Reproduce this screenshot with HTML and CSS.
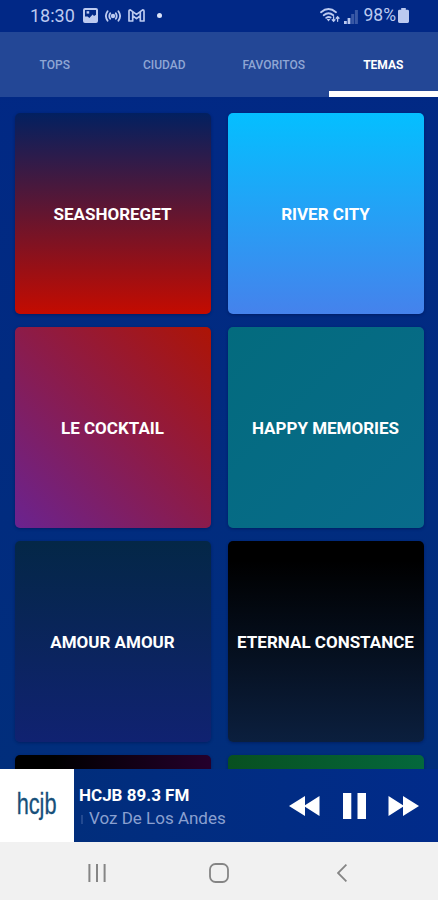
FILE: index.html
```html
<!DOCTYPE html>
<html lang="es">
<head>
<meta charset="UTF-8" />
<meta name="viewport" content="width=device-width, initial-scale=1" />
<title>Radio - Temas</title>
<link rel="stylesheet" href="styles.css">
</head>
<body>
<div class="phone">
  <div class="status-bar">
    <span class="clock">18:30</span>
    <svg class="icon-image" width="15" height="15" viewBox="0 0 15 15" aria-hidden="true">
      <rect x="1" y="1" width="13" height="13" rx="1" fill="none" stroke="currentColor" stroke-width="2"/>
      <path d="M2 8.6 L4.6 8.6 L6.4 10 L9.6 6.6 L11 8 L13.5 6.4 V13.5 H2 Z" fill="currentColor"/>
      <path d="M3.6 3.2 H6.2 V5.6 H3.6 Z" fill="currentColor"/>
    </svg>
    <svg class="icon-cast" width="16" height="12" viewBox="0 0 16 12" fill="none" stroke="currentColor" stroke-width="1.8" stroke-linecap="round" aria-hidden="true">
      <circle cx="8" cy="6" r="1.3" fill="currentColor"/>
      <path d="M5.2 3.2 Q3.4 6 5.2 8.8 M10.8 3.2 Q12.6 6 10.8 8.8 M2.6 1.2 Q-0.8 6 2.6 10.8 M13.4 1.2 Q16.8 6 13.4 10.8"/>
    </svg>
    <svg class="icon-mail" width="17" height="13" viewBox="0 0 17 13" fill="none" stroke="currentColor" stroke-width="1.7" stroke-linejoin="round" aria-hidden="true">
      <path d="M1 2 Q1 0.9 2.3 0.9 L8.5 5.4 L14.7 0.9 Q16 0.9 16 2 V12 H12.3 V6.8 L8.5 9.6 L4.7 6.8 V12 H1 Z M4.7 2.8 V6.8 M12.3 2.8 V6.8"/>
    </svg>
    <span class="dot"></span>
    <div class="status-right">
      <svg width="20" height="15" viewBox="0 0 20 15" fill="none" stroke="currentColor" stroke-width="1.8" stroke-linecap="round" aria-hidden="true">
        <path d="M1 4.2 Q8.5 -2.2 16 4.2 M3.7 7.2 Q8.5 3.2 13.3 7.2 M6.2 9.9 Q8.5 8.2 10.6 9.6"/>
        <path d="M6.6 11 H10.4 L8.5 13.6 Z" fill="currentColor" stroke="none"/>
        <path d="M13.6 8.6 V13 M12.2 11.7 L13.6 13.2 L15 11.7 M17.6 13.3 V9 M16.2 10.2 L17.6 8.7 L19 10.2" stroke-width="1.3"/>
      </svg>
      <svg class="icon-signal" width="14" height="14" viewBox="0 0 14 14" fill="currentColor" aria-hidden="true">
        <path d="M0 11h2.8v3H0z M3.6 8h2.8v6H3.6z"/>
        <path d="M7.2 4h3v10h-3z M10.9 0h3v14h-3z" opacity=".3"/>
      </svg>
      <span class="battery-text">98%</span>
      <svg class="icon-battery" width="11" height="15" viewBox="0 0 11 15" fill="currentColor" aria-hidden="true">
        <path d="M3.2 0 H7.8 V1.8 H9.6 Q11 1.8 11 3.2 V13.6 Q11 15 9.6 15 H1.4 Q0 15 0 13.6 V3.2 Q0 1.8 1.4 1.8 H3.2 Z"/>
      </svg>
    </div>
  </div>

  <nav class="tabs">
    <a class="tab">TOPS</a>
    <a class="tab">CIUDAD</a>
    <a class="tab">FAVORITOS</a>
    <a class="tab active">TEMAS</a>
  </nav>

  <main class="themes">
    <div class="card seashore">SEASHOREGET</div>
    <div class="card river">RIVER CITY</div>
    <div class="card cocktail">LE COCKTAIL</div>
    <div class="card memories">HAPPY MEMORIES</div>
    <div class="card amour">AMOUR AMOUR</div>
    <div class="card eternal">ETERNAL CONSTANCE</div>
    <div class="card plum"></div>
    <div class="card forest"></div>
  </main>

  <div class="player">
    <div class="logo"><span>hcjb</span></div>
    <div class="station">
      <div class="station-name">HCJB 89.3 FM</div>
      <div class="station-sub">Voz De Los Andes</div>
    </div>
    <div class="controls">
      <svg width="31" height="20" viewBox="0 0 31 20" fill="#fff" aria-label="Anterior">
        <path d="M0 10 L16 0 V9.2 L30.5 0 V20 L16 10.8 V20 Z"/>
      </svg>
      <svg width="23" height="26" viewBox="0 0 23 26" fill="#fff" aria-label="Pausa">
        <path d="M0 0h8.3v26H0z M14.5 0h8.5v26h-8.5z"/>
      </svg>
      <svg width="31" height="20" viewBox="0 0 31 20" fill="#fff" aria-label="Siguiente">
        <path d="M31 10 L15 0 V9.2 L0.5 0 V20 L15 10.8 V20 Z"/>
      </svg>
    </div>
  </div>

  <div class="nav-bar">
    <svg width="18" height="18" viewBox="0 0 18 18" stroke="currentColor" stroke-width="2" aria-hidden="true">
      <path d="M1.4 0 V18 M9 0 V18 M16.6 0 V18"/>
    </svg>
    <svg class="icon-home" width="20" height="20" viewBox="0 0 20 20" fill="none" stroke="currentColor" stroke-width="1.8" aria-hidden="true">
      <rect x="1" y="1" width="18" height="18" rx="5.5"/>
    </svg>
    <svg width="10" height="18" viewBox="0 0 10 18" fill="none" stroke="currentColor" stroke-width="1.8" aria-hidden="true">
      <path d="M9.4 0.6 L1 9 L9.4 17.4"/>
    </svg>
  </div>
</div>
</body>
</html>
```
FILE: styles.css
```css
*, *::before, *::after {
  box-sizing: border-box;
}
body {
  margin: 0;
  font-family: Roboto, "Liberation Sans", sans-serif;
  background: #012983;
}
svg {
  display: block;
  flex: none;
}
.phone {
  display: flex;
  flex-direction: column;
  width: 438px;
  height: 900px;
  overflow: hidden;
  background: linear-gradient(#012886, #012f7a);
}

/* Status bar */
.status-bar {
  display: flex;
  flex: none;
  align-items: center;
  height: 32px;
  padding: 0 29px 1px 30px;
  color: #bccaf0;
  background: #012886;
}
.clock {
  width: 53px;
  font-size: 18px;
  line-height: 31px;
}
.icon-cast {
  margin-left: 7px;
}
.icon-mail {
  margin-left: 7px;
}
.dot {
  width: 5px;
  height: 5px;
  margin-left: 12px;
  border-radius: 50%;
  background: #dbe3f8;
}
.status-right {
  display: flex;
  align-items: center;
  margin-left: auto;
}
.icon-signal {
  margin: 2px 6px 0 4px;
}
.battery-text {
  font-size: 17.5px;
  line-height: 31px;
}
.icon-battery {
  margin-left: 2px;
}

/* Tabs */
.tabs {
  display: grid;
  flex: none;
  grid-template-columns: repeat(4, 1fr);
  height: 65px;
  background: #234796;
}
.tab {
  display: flex;
  align-items: center;
  justify-content: center;
  border-top: 6px solid transparent;
  border-bottom: 6px solid transparent;
  font-size: 12px;
  font-weight: 500;
  color: #8fa6d4;
}
.tab.active {
  border-bottom-color: #fff;
  font-weight: 700;
  color: #fff;
}

/* Theme cards */
.themes {
  display: grid;
  flex: 1;
  grid-template-columns: 196px 196px;
  grid-auto-rows: 201px;
  gap: 13px 17px;
  min-height: 0;
  padding: 16px 14px 0 15px;
  overflow: hidden;
}
.card {
  display: flex;
  align-items: center;
  justify-content: center;
  padding-right: 1px;
  border-radius: 5px;
  box-shadow: 0 1px 3px rgba(0, 10, 60, 0.4);
  font-size: 17px;
  font-weight: 700;
  white-space: nowrap;
  color: #fff;
}
.seashore { background: linear-gradient(#022060, #c40b00); }
.river { background: linear-gradient(#04bfff, #4582ec); }
.cocktail { background: linear-gradient(45deg, #6a2390, #ad1405); }
.memories { background: linear-gradient(135deg, #036b7e, #086b8b); }
.amour { background: linear-gradient(#042747, #102271); }
.eternal { background: linear-gradient(#000 10%, #0b1f3e); }
.plum { background: linear-gradient(90deg, #000 20%, #25002c); }
.forest { background: linear-gradient(90deg, #085020, #04683c); }

/* Player */
.player {
  display: flex;
  flex: none;
  align-items: center;
  height: 73px;
  background: linear-gradient(90deg, #012e79, #012b8a);
}
.logo {
  display: flex;
  align-items: center;
  justify-content: center;
  width: 74px;
  height: 73px;
  padding-bottom: 4px;
  background: #fff;
}
.logo span {
  font-family: "Liberation Sans", Arial, sans-serif;
  font-size: 29px;
  line-height: 30px;
  color: #17507a;
  -webkit-text-stroke: 0.3px #17507a;
  transform: scaleX(0.75);
}
.station {
  width: 210px;
  padding: 2px 0 0 5px;
  white-space: nowrap;
}
.station-name {
  font-size: 17px;
  font-weight: 700;
  line-height: 22px;
  color: #fff;
}
.station-sub {
  display: flex;
  align-items: center;
  font-size: 17px;
  line-height: 24px;
  color: #8aa0d0;
}
/* Tail of the scrolling text as it fades out on the left */
.station-sub::before {
  content: "";
  width: 2px;
  height: 9px;
  margin: 3px 6px 0 2px;
  background: rgba(138, 160, 208, 0.25);
}
.controls {
  display: flex;
  align-items: center;
  justify-content: space-between;
  width: 130px;
  margin-left: 5px;
}

/* System navigation */
.nav-bar {
  display: flex;
  flex: none;
  align-items: center;
  justify-content: space-between;
  height: 58px;
  padding: 3px 91px 0 88px;
  color: #858585;
  background: #f1f1f1;
}
.icon-home {
  margin-right: 5px;
}
```
